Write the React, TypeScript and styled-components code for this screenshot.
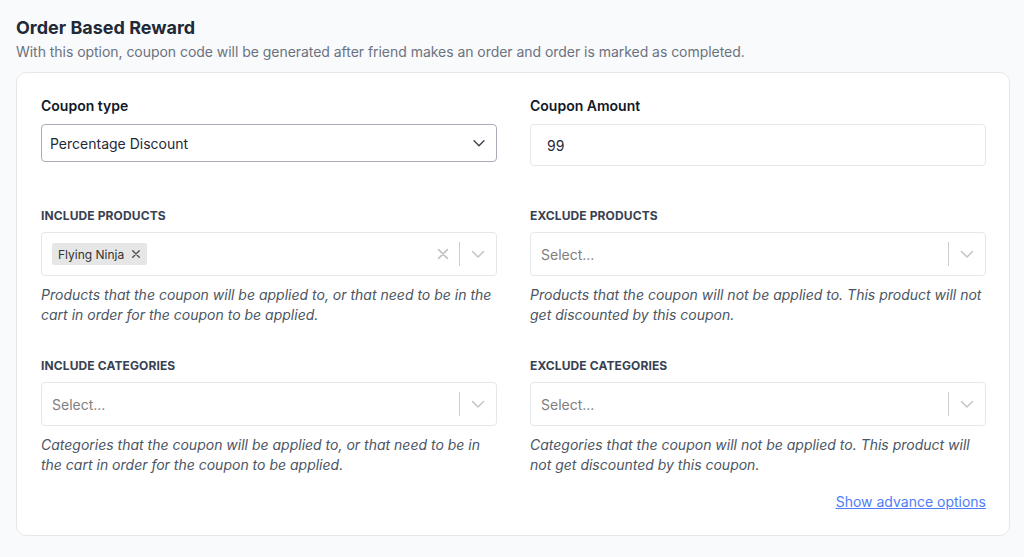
import styled, { createGlobalStyle } from 'styled-components';

const GlobalStyle = createGlobalStyle`
	body {
		margin: 0;
		background: #f9fafb;
		font-family: Inter, "Noto Sans", "Liberation Sans", sans-serif;
		color: #1f2937;
	}
`;

interface FieldSchema {
	id: string;
	label: string;
	placeholder?: string;
	tags?: string[];
	help: string;
}

const leftFields: FieldSchema[] = [
	{
		id: 'include-products',
		label: 'Include products',
		tags: ['Flying Ninja'],
		help: 'Products that the coupon will be applied to, or that need to be in the cart in order for the coupon to be applied.',
	},
	{
		id: 'include-categories',
		label: 'Include categories',
		placeholder: 'Select...',
		help: 'Categories that the coupon will be applied to, or that need to be in the cart in order for the coupon to be applied.',
	},
];

const rightFields: FieldSchema[] = [
	{
		id: 'exclude-products',
		label: 'Exclude products',
		placeholder: 'Select...',
		help: 'Products that the coupon will not be applied to. This product will not get discounted by this coupon.',
	},
	{
		id: 'exclude-categories',
		label: 'Exclude categories',
		placeholder: 'Select...',
		help: 'Categories that the coupon will not be applied to. This product will not get discounted by this coupon.',
	},
];

function Chevron({ color, size = 20 }: { color: string; size?: number }) {
	return (
		<svg width={size} height={size} viewBox="0 0 20 20" fill="none">
			<path d="M4.5 7.5l5.5 5.5 5.5-5.5" stroke={color} strokeWidth="1.5" strokeLinecap="round" strokeLinejoin="round" />
		</svg>
	);
}

function Cross({ size, color, weight = 2 }: { size: number; color: string; weight?: number }) {
	return (
		<svg width={size} height={size} viewBox="0 0 20 20" fill="none">
			<path d="M4.5 4.5l11 11M15.5 4.5l-11 11" stroke={color} strokeWidth={weight} strokeLinecap="round" />
		</svg>
	);
}

function MultiSelect({ field }: { field: FieldSchema }) {
	const hasTags = !!field.tags && field.tags.length > 0;
	return (
		<FieldBlock>
			<SmallLabel>{field.label}</SmallLabel>
			<SelectControl>
				<ValueArea>
					{hasTags ? (
						field.tags!.map((tag) => (
							<Tag key={tag}>
								<span>{tag}</span>
								<TagRemove>
									<Cross size={12} color="#4b4b4b" weight={2.2} />
								</TagRemove>
							</Tag>
						))
					) : (
						<Placeholder>{field.placeholder}</Placeholder>
					)}
				</ValueArea>
				<Indicators>
					{hasTags && (
						<IndicatorButton>
							<Cross size={16} color="#c4c4c4" weight={2.2} />
						</IndicatorButton>
					)}
					<IndicatorSeparator />
					<IndicatorButton>
						<Chevron color="#c4c4c4" size={20} />
					</IndicatorButton>
				</Indicators>
			</SelectControl>
			<Help>{field.help}</Help>
		</FieldBlock>
	);
}

export default function App() {
	return (
		<Page>
			<GlobalStyle />
			<Title>Order Based Reward</Title>
			<Subtitle>
				With this option, coupon code will be generated after friend makes an order and order is marked as
				completed.
			</Subtitle>
			<Card>
				<Grid>
					<FieldBlock>
						<Label>Coupon type</Label>
						<NativeSelect>
							<span>Percentage Discount</span>
							<Chevron color="#374151" size={18} />
						</NativeSelect>
					</FieldBlock>
					<FieldBlock>
						<Label>Coupon Amount</Label>
						<TextInput>99</TextInput>
					</FieldBlock>
					<Column>
						{leftFields.map((f) => (
							<MultiSelect key={f.id} field={f} />
						))}
					</Column>
					<Column>
						{rightFields.map((f) => (
							<MultiSelect key={f.id} field={f} />
						))}
					</Column>
				</Grid>
				<Footer>
					<AdvanceLink href="#">Show advance options</AdvanceLink>
				</Footer>
			</Card>
		</Page>
	);
}

const Page = styled.div`
	padding: 16px 14px 21px 16px;
`;

const Title = styled.h2`
	margin: 0;
	font-size: 18px;
	line-height: 24px;
	font-weight: 700;
	color: #1f2937;
`;

const Subtitle = styled.p`
	margin: 2px 0 10px;
	font-size: 14px;
	line-height: 20px;
	letter-spacing: -0.04px;
	color: #6b7280;
`;

const Card = styled.section`
	background: #fff;
	border: 1px solid #e5e7eb;
	border-radius: 10px;
	padding: 23px 23px 23px 24px;
`;

const Grid = styled.div`
	display: grid;
	grid-template-columns: 456px 456px;
	column-gap: 33px;
	row-gap: 42px;
`;

const Column = styled.div`
	display: flex;
	flex-direction: column;
	gap: 33px;
`;

const FieldBlock = styled.div`
	display: flex;
	flex-direction: column;
`;

const Label = styled.label`
	font-size: 14px;
	line-height: 20px;
	font-weight: 600;
	color: #111827;
	margin-bottom: 8px;
`;

const SmallLabel = styled.label`
	font-size: 12px;
	line-height: 16px;
	font-weight: 700;
	text-transform: uppercase;
	letter-spacing: 0.01em;
	color: #374151;
	margin-bottom: 8px;
`;

const NativeSelect = styled.div`
	height: 38px;
	box-sizing: border-box;
	border: 1px solid #a8adb5;
	border-radius: 4px;
	display: flex;
	align-items: center;
	justify-content: space-between;
	padding: 0 8px 0 8px;
	font-size: 14px;
	color: #1f2937;
`;

const TextInput = styled.div`
	height: 42px;
	box-sizing: border-box;
	border: 1px solid #e5e7eb;
	border-radius: 4px;
	display: flex;
	align-items: center;
	padding: 0 16px;
	font-size: 14px;
	color: #1f2937;
`;

const SelectControl = styled.div`
	height: 44px;
	box-sizing: border-box;
	border: 1px solid #e5e7eb;
	border-radius: 4px;
	display: flex;
	align-items: center;
	background: #fff;
`;

const ValueArea = styled.div`
	flex: 1;
	display: flex;
	align-items: center;
	padding: 0 10px;
	gap: 4px;
`;

const Placeholder = styled.span`
	font-size: 14px;
	color: #808080;
`;

const Tag = styled.span`
	display: inline-flex;
	align-items: center;
	background: #e6e6e6;
	border-radius: 2px;
	height: 22px;
	font-size: 12px;
	color: #333;
	padding-left: 6px;

	span {
		padding-right: 3px;
	}
`;

const TagRemove = styled.i`
	display: inline-flex;
	align-items: center;
	padding: 0 5px 0 3px;
`;

const Indicators = styled.div`
	display: flex;
	align-items: center;
	align-self: stretch;
`;

const IndicatorButton = styled.div`
	display: flex;
	align-items: center;
	padding: 0 8px;
`;

const IndicatorSeparator = styled.span`
	width: 1px;
	align-self: center;
	height: 24px;
	background: #cccccc;
`;

const Help = styled.p`
	margin: 9px 0 0;
	font-size: 14px;
	line-height: 20px;
	font-style: italic;
	color: #4b5563;
`;

const Footer = styled.div`
	display: flex;
	justify-content: flex-end;
	margin-top: 17px;
`;

const AdvanceLink = styled.a`
	font-size: 14px;
	line-height: 20px;
	color: #4f7df9;
	text-decoration: underline;
`;
